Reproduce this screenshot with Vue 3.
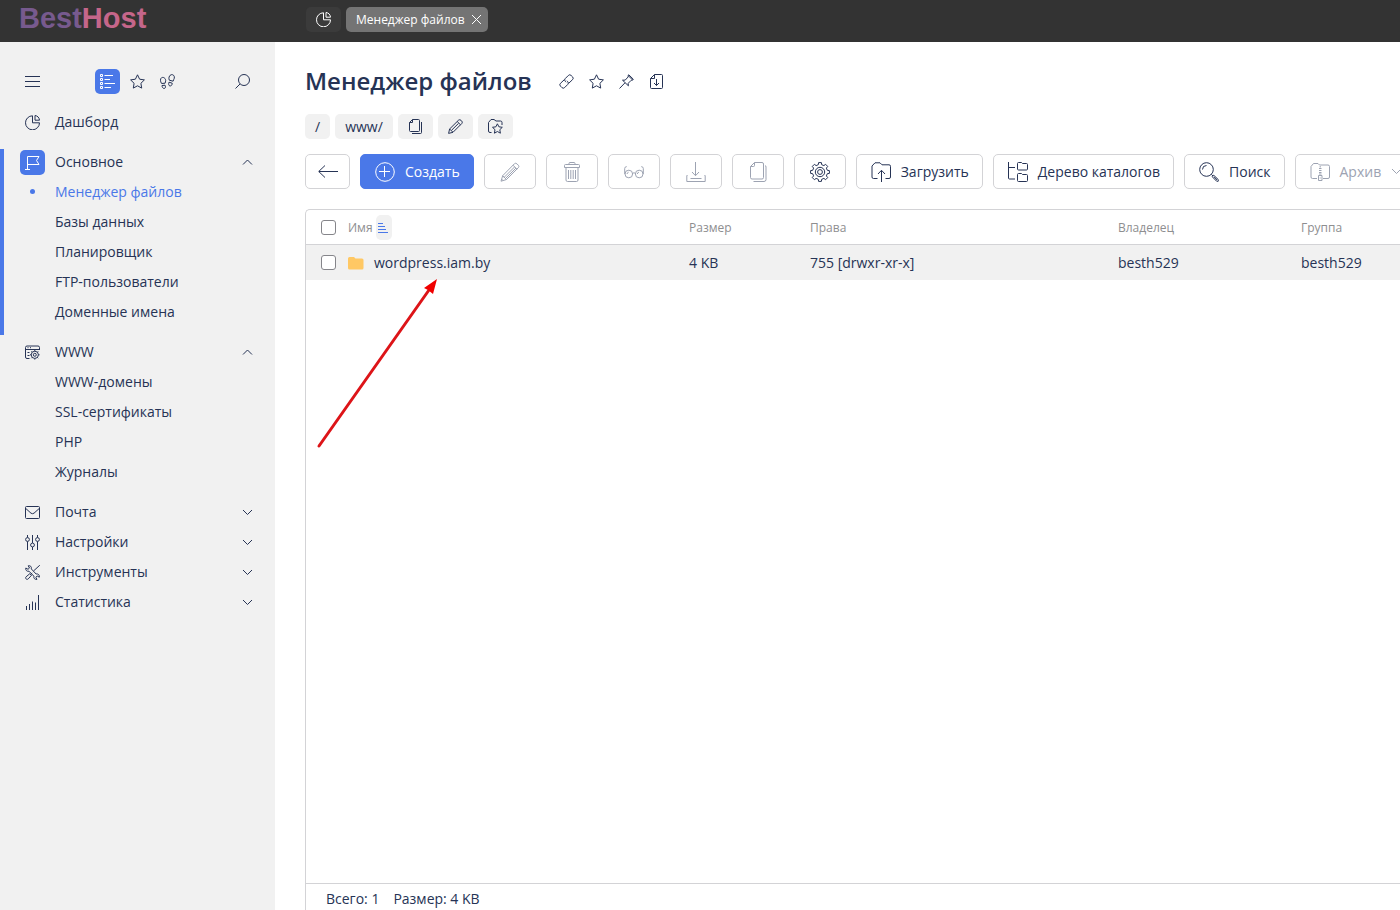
<script setup>
import { h } from 'vue'

const shapes = {
  pie: [15, '<path d="M7.5 .8A7 7 0 1 0 14.5 7.8H7.5z"/><path d="M10 .5v4.7h4.5C14.3 2.6 12.4.7 10 .5z"/>'],
  menu: [15, '<path d="M0 2.5h15M0 7.5h15M0 12.5h15"/>'],
  list: [15, '<path d="M.5.5h2v2h-2zM.5 4.5h2v2h-2zM.5 8.5h2v2h-2zM.5 12.5h2v2h-2zM4.5 1.5H13M4.5 5.5H10M4.5 9.5H15M4.5 13.5H11"/>'],
  star: [15, '<path d="M7.5.8l2.1 4.4 4.8.7-3.5 3.4.8 4.8-4.2-2.3-4.2 2.3.8-4.8L.6 5.9l4.8-.7z"/>'],
  steps: [15, '<path d="M1.600 9.500C.2 7.500 0 4.700 1.600 3.700c2-1 4 .6 4.100 3 0 1-.5 1.500-.6 2.500zM2 11.500l3-.3c.8 1.300.6 3-.7 3.300C2.800 14.500 2 13 2 11.500zM9.300 6.200C8.500 4.500 8.800 1.500 11.200.7c2.200-.5 3.600 1.500 3.100 3.500-.3 1-1 2-1.200 3zM9 8.200l3.200 1c.1 1.600-1 3.100-2.400 2.700C8.400 11.500 8.500 9.700 9 8.200z"/>'],
  search: [15, '<circle cx="9" cy="6" r="5.500"/><path d="M5 10L.5 14.500"/>'],
  flag: [15, '<path d="M2.500 14.500V1.500H14L11.500 5.500 14 9.500H2.500M0 14.500h5"/>'],
  site: [15, '<path d="M4.500 13.500H2A1.500 1.500 0 0 1 .5 12V2.500A1.500 1.500 0 0 1 2 1h11a1.500 1.500 0 0 1 1.500 1.500V5M.5 4.500h14M2.500 2.700h1M5 2.700h1M2.500 7.500h2M2.500 10.500h2"/><circle cx="9.800" cy="9.800" r="1.500"/><circle cx="9.800" cy="9.800" r="3.600"/><path d="M9.800 5v1.200M9.800 13.400v1.200M5 9.800h1.200M13.400 9.800h1.200M6.400 6.400l.8.8M12.400 12.400l.8.8M6.400 13.200l.8-.8M12.400 7.200l.8-.8"/>'],
  mail: [15, '<rect x=".5" y="1.500" width="14" height="12" rx="1"/><path d="M.8 3.500L6 8.200q1.500 1 3 0l5.200-4.700"/>'],
  sliders: [15, '<circle cx="2.500" cy="4.500" r="1.900"/><circle cx="7.500" cy="10" r="1.900"/><circle cx="12.500" cy="4.500" r="1.900"/><path d="M2.500 0v2.600M2.500 6.400V15M7.500 0v8M7.500 12v3M12.500 0v2.600M12.500 6.400V15"/>'],
  tools: [15, '<path d="M.8 3l2.200 1.300L4.500 3 3.200.8C5.300.2 6.900 1.800 6.300 3.900L11.100 9c2.100-.5 3.700 1.100 3.200 3.200L12.200 11 10.800 12.300 12 14.300c-2.100.5-3.700-1.100-3.100-3.100L4 6.200C2 6.800.3 5.100.8 3z"/><path d="M14.800.2L8.500 6M4.800 8.700L6.500 10.300 3.200 13.900c-.8.7-1.500.6-2.100 0s-.7-1.400 0-2.100zM5.600 9.500L7.200 8"/>'],
  bars: [15, '<path d="M1.500 11v4M4.500 9v6M7.500 6.500V15M10.500 7.500V15M13.500 0v15"/>'],
  link: [15, '<path d="M9.700 9.300L13.500 5.700a2 2 0 0 0 0-2.900l-1.300-1.300a2 2 0 0 0-2.900 0L6.300 4.500a2 2 0 0 0 0 2.900l.9.800M5.300 5.700L1.500 9.300a2 2 0 0 0 0 2.900l1.300 1.300a2 2 0 0 0 2.900 0L8.700 10.500a2 2 0 0 0 0-2.900l-.9-.8"/>'],
  pin: [15, '<path d="M9 1.500l4.700 4.500-1.500.3-3 3 .2 2.500L3.500 6.200l2.700-.1 3-3.200zM6 8.800L.5 14.500M9 1.500l.8-.7 4.500 4.400-.6.800"/>'],
  save: [15, '<path d="M5.500.5h7a1 1 0 0 1 1 1v12a1 1 0 0 1-1 1h-10a1 1 0 0 1-1-1v-9zM5.500.5v4h-4M7.500 5v6.500M5 9l2.500 2.500L10 9"/>'],
  copy: [15, '<path d="M4.500.5h6a1 1 0 0 1 1 1v10a1 1 0 0 1-1 1h-8a1 1 0 0 1-1-1v-8zM4.500.5v3h-3M13.500 3v10.500a1 1 0 0 1-1 1H4"/>'],
  pencil: [15, '<path d="M.6 14.400l1-4.400L10.500 1.200q1.300-1 2.500.1l.7.700q1.200 1.200.1 2.500L5 13.300zM1.600 10l3.400 3.300M9.200 2.500l3.300 3.300M3.500 11.300l7-6.900"/>'],
  favFolder: [15, '<path d="M3.500 13.500H2A1.500 1.500 0 0 1 .5 12V3.500L3 .5H6l2 1.500h4.500A1.500 1.500 0 0 1 14 3.500V6"/><path d="M9.400 4.800l1.500 3 3.400.5-2.500 2.400.6 3.500-3-1.700-3 1.700.6-3.500-2.500-2.400 3.400-.5z"/>'],
  back: [20, '<path d="M20 9.500H1M7 3.500l-6.300 6 6.300 6"/>'],
  plus: [20, '<circle cx="10" cy="10" r="9.300"/><path d="M9.500 4v11M4 9.500h11"/>'],
  bigPencil: [20, '<path d="M1 19.200l1.700-5.500L14.500 1.700q1.200-1 2.400.1l1.500 1.500q1 1.200 0 2.300L6.500 17.500zM2.700 13.700l3.800 3.800M13 3.200l4 4M4 15.500l10.500-10.500M5.500 16.500L16 6M1.500 17l1.500 1.500"/>'],
  trash: [20, '<path d="M7 3V1.500a1 1 0 0 1 1-1h4a1 1 0 0 1 1 1V3M2.500 5.500v-2a1 1 0 0 1 1-1h13a1 1 0 0 1 1 1v2zM4 5.500v12.500a1.500 1.500 0 0 0 1.500 1.500h9a1.500 1.500 0 0 0 1.500-1.500V5.500M6.500 8v9M8.800 8v9M11.200 8v9M13.500 8v9"/>'],
  glasses: [20, '<circle cx="4.800" cy="12" r="3.800"/><circle cx="15.200" cy="12" r="3.800"/><path d="M8.500 11.500q1.500-1.600 3 0M.7 12V6.500Q.7 4.700 2.700 4.600M19.300 12V6.500q0-1.800-2-1.900M3 12q.2-1.500 1.600-1.800M13.300 12q.2-1.500 1.600-1.800"/>'],
  download: [20, '<path d="M9.500 0v13.500M6 10l3.500 3.700L13 10M1.500 13.500H.8V19.500h18.400v-6h-.7M4.500 16.500h11"/>'],
  bigCopy: [20, '<path d="M6.500.5h7.500a1.500 1.500 0 0 1 1.500 1.500v13.500a1.500 1.500 0 0 1-1.500 1.500H4a1.500 1.500 0 0 1-1.500-1.500v-11zM6.500.5v3a1 1 0 0 1-1 1h-3M17 3.500q1 .2 1 1.500v12.500a2 2 0 0 1-2 2H5.500"/>'],
  gear: [20, '<path d="M8.300 2.700L8.600.6h2.800l.3 2.100 2.200.9 1.700-1.300 2.100 2.100-1.300 1.700.9 2.200 2.100.3v2.800l-2.100.3-.9 2.200 1.300 1.700-2.100 2.100-1.700-1.300-2.200.9-.3 2.100H8.600l-.3-2.100-2.200-.9-1.700 1.300-2.100-2.100 1.300-1.700-.9-2.200-2.100-.3V8.600l2.100-.3.9-2.200-1.300-1.700 2.100-2.100 1.700 1.300z"/><circle cx="10" cy="10" r="4.700"/><circle cx="10" cy="10" r="2.400"/>'],
  upload: [20, '<path d="M6.500 16.500H2.500a1.500 1.500 0 0 1-1.500-1.500V4L4 .8h5l2 2h7a1.500 1.500 0 0 1 1.500 1.500V15a1.500 1.500 0 0 1-1.500 1.500h-3.500M10.500 20V8.500M7 12l3.500-3.700L14 12"/>'],
  tree: [20, '<path d="M.5 0v16a1 1 0 0 0 1 1H7M.5 5.500H7M10.500.5h3l1 1h4a1 1 0 0 1 1 1V7a1 1 0 0 1-1 1h-8a1 1 0 0 1-1-1V1.500a1 1 0 0 1 1-1zM10.500 11.500h3l1 1h4a1 1 0 0 1 1 1V18.500a1 1 0 0 1-1 1h-8a1 1 0 0 1-1-1v-6a1 1 0 0 1 1-1z"/>'],
  bigSearch: [20, '<circle cx="7.500" cy="7.500" r="6.800"/><path d="M3.500 7.500a4 4 0 0 1 4-4M12.300 12.300l1.700 1.700M13.200 14.700l1.500-1.500 4.700 4.500q.5 1-.2 1.600-.7.500-1.500 0zM15 14.800l3.500 3.600"/>'],
  archive: [20, '<path d="M7 16.500H2.500a1.500 1.500 0 0 1-1.500-1.500V4.500L3.500 1.500H8l1.500 1.500h8.500a1.500 1.500 0 0 1 1.500 1.500V15a1.500 1.500 0 0 1-1.500 1.500h-5M8.500 13.500h3.500v5H8.500zM10.200 15.500v1M10.200 4v1.500M9 6.500h2.500M9 8.500h2.500M9 10.500h2.500M9 12h2.500"/>'],
  up: [11, '<path d="M1 7.500L5.500 3 10 7.500"/>'],
  down: [11, '<path d="M1 3l4.500 4.500L10 3"/>'],
  close: [11, '<path d="M1 1l9 9M10 1l-9 9"/>'],
  sort: [11, '<path d="M0 1.500h5M0 4.500h7M0 7.500h8M0 10.500h10"/>'],
  folder: [16, '<path d="M0 3.500A1.500 1.500 0 0 1 1.500 2H6l1.500 1.500h6.500a1.500 1.500 0 0 1 1.500 1.500v8a1.500 1.500 0 0 1-1.500 1.500H1.500A1.500 1.500 0 0 1 0 13z" fill="#ffc864" stroke="none"/>'],
}

const Icon = ({ name }) => {
  const [size, body] = shapes[name]
  return h('svg', {
    width: size, height: size, viewBox: `0 0 ${size} ${size}`,
    fill: 'none', stroke: 'currentColor', 'aria-hidden': 'true', innerHTML: body,
  })
}
Icon.props = ['name']

const groups = [
  { icon: 'flag', title: 'Основное', active: true, items: ['Менеджер файлов', 'Базы данных', 'Планировщик', 'FTP-пользователи', 'Доменные имена'] },
  { icon: 'site', title: 'WWW', items: ['WWW-домены', 'SSL-сертификаты', 'PHP', 'Журналы'] },
  { icon: 'mail', title: 'Почта' },
  { icon: 'sliders', title: 'Настройки' },
  { icon: 'tools', title: 'Инструменты' },
  { icon: 'bars', title: 'Статистика' },
]
const titleTools = [['link', 'Ссылка'], ['star', 'В избранное'], ['pin', 'Закрепить'], ['save', 'Экспорт']]
const crumbTools = [['copy', 'Копировать путь'], ['pencil', 'Изменить путь'], ['favFolder', 'Избранные папки']]
const actions = [
  { icon: 'bigPencil', name: 'Изменить', off: true },
  { icon: 'trash', name: 'Удалить', off: true },
  { icon: 'glasses', name: 'Просмотр', off: true },
  { icon: 'download', name: 'Скачать', off: true },
  { icon: 'bigCopy', name: 'Копировать', off: true },
  { icon: 'gear', name: 'Атрибуты' },
  { icon: 'upload', label: 'Загрузить' },
  { icon: 'tree', label: 'Дерево каталогов' },
  { icon: 'bigSearch', label: 'Поиск' },
  { icon: 'archive', label: 'Архив', off: true, more: true },
]
</script>

<template>
  <div class="app">
    <header class="topbar">
      <a class="logo" href="#"><span>Best</span><b>Host</b></a>
      <nav class="tabs">
        <button class="tab tab-home" aria-label="Дашборд"><Icon name="pie" /></button>
        <div class="tab tab-current">
          <a href="#">Менеджер файлов</a>
          <button class="close" aria-label="Закрыть"><Icon name="close" /></button>
        </div>
      </nav>
    </header>
    <div class="body">
      <aside class="sidebar">
        <div class="side-tools">
          <button class="plain" aria-label="Меню"><Icon name="menu" /></button>
          <div class="modes">
            <button class="plain badge" aria-label="Список"><Icon name="list" /></button>
            <button class="plain" aria-label="Избранное"><Icon name="star" /></button>
            <button class="plain" aria-label="История"><Icon name="steps" /></button>
          </div>
          <button class="plain" aria-label="Поиск"><Icon name="search" /></button>
        </div>
        <nav class="menu">
          <a class="head dashboard" href="#"><span class="mark"><Icon name="pie" /></span>Дашборд</a>
          <section v-for="g in groups" :key="g.title" class="group" :class="{ active: g.active }">
            <button class="head">
              <span class="mark" :class="{ badge: g.active }"><Icon :name="g.icon" /></span>
              <span class="grow">{{ g.title }}</span>
              <Icon :name="g.items ? 'up' : 'down'" />
            </button>
            <ul v-if="g.items">
              <li v-for="(item, i) in g.items" :key="item">
                <a href="#" :class="{ current: g.active && i === 0 }">{{ item }}</a>
              </li>
            </ul>
          </section>
        </nav>
      </aside>
      <main class="main">
        <div class="title">
          <h1>Менеджер файлов</h1>
          <div class="title-tools">
            <button v-for="[icon, name] in titleTools" :key="icon" class="plain" :aria-label="name"><Icon :name="icon" /></button>
          </div>
        </div>
        <div class="crumbs">
          <a class="crumb" href="#">/</a>
          <a class="crumb" href="#">www/</a>
          <button v-for="[icon, name] in crumbTools" :key="icon" class="crumb" :aria-label="name"><Icon :name="icon" /></button>
        </div>
        <div class="toolbar">
          <button class="btn back" aria-label="Назад"><Icon name="back" /></button>
          <button class="btn primary"><Icon name="plus" />Создать</button>
          <button v-for="a in actions" :key="a.icon" class="btn" :class="{ square: !a.label }" :disabled="a.off" :aria-label="a.name">
            <Icon :name="a.icon" /><template v-if="a.label">{{ a.label }}</template><Icon v-if="a.more" name="down" />
          </button>
        </div>
        <div class="panel">
          <table>
            <colgroup><col class="c-check"><col><col class="c-size"><col class="c-rights"><col class="c-owner"><col class="c-group"></colgroup>
            <thead>
              <tr>
                <th class="check"><input type="checkbox" aria-label="Выбрать все"></th>
                <th><span class="sorted">Имя<button class="sort" aria-label="Сортировка"><Icon name="sort" /></button></span></th>
                <th>Размер</th><th>Права</th><th>Владелец</th><th>Группа</th>
              </tr>
            </thead>
            <tbody>
              <tr>
                <td class="check"><input type="checkbox" aria-label="Выбрать wordpress.iam.by"></td>
                <td><span class="file"><Icon name="folder" />wordpress.iam.by</span></td>
                <td>4 KB</td><td>755 [drwxr-xr-x]</td><td>besth529</td><td>besth529</td>
              </tr>
            </tbody>
          </table>
          <svg class="pointer" width="122" height="172" viewBox="0 0 122 172" aria-hidden="true">
            <path d="M3 167L113 11" stroke="#dd1418" stroke-width="3" stroke-linecap="round" />
            <path d="M121 0L117 15 112 11 108 9z" fill="#f00000" />
          </svg>
          <footer class="summary"><span>Всего: 1</span><span>Размер: 4 KB</span></footer>
        </div>
      </main>
    </div>
  </div>
</template>

<style>
body { margin: 0; }
</style>

<style scoped>
* { box-sizing: border-box; }
.app {
  height: 100vh; display: flex; flex-direction: column; overflow: hidden;
  font: 14px/20px "Open Sans", "Noto Sans", sans-serif; color: #263355; background: #fff;
}
a { color: inherit; text-decoration: none; }
button { font: inherit; color: inherit; border: 0; padding: 0; background: none; display: flex; align-items: center; justify-content: center; }
svg { display: block; flex: none; }
.plain { width: 25px; height: 25px; border-radius: 5px; }
.badge { background: #4a78e8; color: #fff; border-radius: 5px; }

.topbar { flex: none; height: 42px; background: #333; display: flex; }
.logo { width: 306px; padding: 2px 19px; font: bold 29px/32px "Liberation Sans", sans-serif; color: #775a8e; }
.logo b { color: #c5668a; }
.tabs { display: flex; gap: 5px; padding-top: 7px; color: #fff; }
.tab { height: 25px; border-radius: 5px; display: flex; align-items: center; }
.tab-home { width: 35px; background: #3b3b3b; }
.tab-current { background: #747474; padding-left: 10px; font-size: 12px; font-weight: 500; }
.close { width: 23px; height: 25px; }

.body { flex: 1; min-height: 0; display: flex; }
.sidebar { flex: none; width: 275px; background: #f1f1f1; padding-top: 27px; }
.side-tools { display: flex; justify-content: space-between; padding: 0 20px; }
.modes { display: flex; gap: 5px; }
.menu { padding-top: 15px; display: flex; flex-direction: column; gap: 4px; }
.head { width: 100%; height: 26px; display: flex; align-items: center; gap: 10px; padding: 0 22px 0 16px; text-align: left; }
.dashboard { padding-left: 20px; margin-bottom: 10px; }
.mark { width: 25px; height: 25px; display: flex; align-items: center; justify-content: center; }
.grow { flex: 1; }
.group { border-left: 4px solid transparent; }
.group.active { border-color: #4a78e8; }
ul { list-style: none; margin: 0; padding: 2px 0 8px; }
li a { display: block; padding: 5px 20px 5px 51px; position: relative; }
li a.current { color: #4a78e8; }
li a.current::before { content: ""; position: absolute; left: 26px; top: 12px; width: 5px; height: 5px; border-radius: 50%; background: #4a78e8; }

.main { flex: 1; min-width: 0; display: flex; flex-direction: column; padding: 19px 0 0 30px; }
.title { display: flex; align-items: center; gap: 22px; height: 40px; }
h1 { margin: 0; font-size: 24px; line-height: 40px; font-weight: 600; white-space: nowrap; }
.title-tools { display: flex; gap: 5px; }
.crumbs { display: flex; gap: 5px; padding-top: 13px; }
.crumb { height: 25px; line-height: 25px; padding: 0 10px; border-radius: 5px; background: #f1f1f1; min-width: 25px; }
.toolbar { display: flex; gap: 10px; padding: 15px 0 20px; overflow: hidden; }
.btn { flex: none; height: 35px; padding: 0 13px 0 14px; gap: 10px; border: 1px solid #d3d3d6; border-radius: 5px; background: #fff; white-space: nowrap; }
.btn:disabled { color: #9da3b2; }
.back { width: 45px; padding: 0; }
.square { width: 52px; padding: 0; }
.primary { background: #4a78e8; border-color: #4a78e8; color: #fff; }

.panel { flex: 1; min-height: 0; position: relative; display: flex; flex-direction: column; border: solid #d3d3d6; border-width: 1px 0 0 1px; border-top-left-radius: 5px; }
table { width: 100%; table-layout: fixed; border-collapse: separate; border-spacing: 0; }
.c-check { width: 42px; }
.c-size { width: 121px; }
.c-rights { width: 308px; }
.c-owner { width: 183px; }
.c-group { width: 99px; }
th, td { height: 35px; padding: 0; text-align: left; font-weight: 400; white-space: nowrap; }
th { padding-top: 1px; font-size: 12px; color: #8e8e90; border-bottom: 1px solid #d3d3d6; }
tbody tr { background: #f1f1f1; }
.check { padding-left: 15px; }
input { appearance: none; display: block; margin: 0; width: 15px; height: 15px; border: 1px solid #85858a; border-radius: 3px; background: #fff; }
.sorted { display: flex; align-items: center; gap: 3px; }
.sort { width: 16px; height: 25px; border-radius: 5px; background: #f1f1f1; color: #4a78e8; }
.file { display: flex; align-items: center; gap: 10px; }
.pointer { position: absolute; left: 10px; top: 69px; }
.summary { margin-top: auto; border-top: 1px solid #d3d3d6; padding: 5px 20px 1px; display: flex; gap: 14px; }
</style>
